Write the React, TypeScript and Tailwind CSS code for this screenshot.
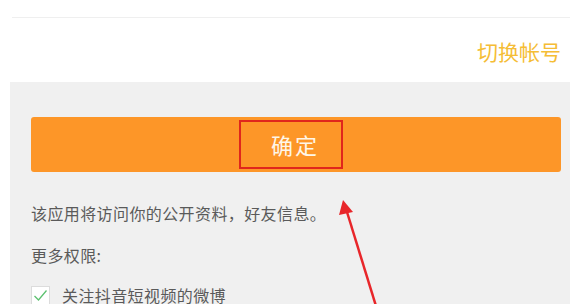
import React from 'react';

const font = { fontFamily: '"Noto Sans CJK SC", "Liberation Sans", sans-serif' };

export default function App() {
  return (
    <div className="relative w-[570px] h-[304px] overflow-hidden bg-white" style={font}>
      {/* top area */}
      <div className="h-[82px] flex flex-col">
        <div className="h-[17px]" />
        <div className="ml-[12px] h-px bg-[#efefef]" />
        <div className="flex justify-end pr-[9px] pt-[20px]">
          <span className="text-[21px] leading-[26px] text-[#f5bd35]">切换帐号</span>
        </div>
      </div>

      {/* gray panel */}
      <div className="ml-[10px] h-[222px] bg-[#f0f0f0] pt-[35px] pl-[21px] pr-[9px]">
        <div className="h-[55px] rounded-[3px] bg-[#fd9628] flex items-center justify-center">
          <div className="mr-[10px] w-[104px] h-[49px] border-2 border-[#e0261c] flex items-center justify-center pl-[8px]">
            <span className="text-[22px] text-[#fff6e8] tracking-[2px]">确定</span>
          </div>
        </div>
        <p className="mt-[29px] text-[16px] leading-[24px] tracking-[0.4px] text-[#5a5a5a]">该应用将访问你的公开资料，好友信息。</p>
        <p className="mt-[18px] text-[16px] leading-[24px] tracking-[0.4px] text-[#5a5a5a]">更多权限:</p>
        <div className="mt-[16px] flex items-center gap-[12px]">
          <div className="w-[19px] h-[19px] bg-white border border-[#dcdcdc] flex items-center justify-center">
            <svg width="15" height="13" viewBox="0 0 15 13">
              <path d="M1.5 7 L5.5 11 L13.5 1.5" fill="none" stroke="#5cc170" strokeWidth="1.3" />
            </svg>
          </div>
          <span className="text-[16px] leading-[24px] tracking-[0.4px] text-[#5a5a5a]">关注抖音短视频的微博</span>
        </div>
      </div>

      {/* red annotation arrow */}
      <svg className="absolute left-0 top-0" width="570" height="304" viewBox="0 0 570 304">
        <line x1="376" y1="306" x2="347" y2="212" stroke="#e8262a" strokeWidth="2.5" />
        <polygon points="343,200 339,215 353,212" fill="#e8262a" />
      </svg>
    </div>
  );
}
